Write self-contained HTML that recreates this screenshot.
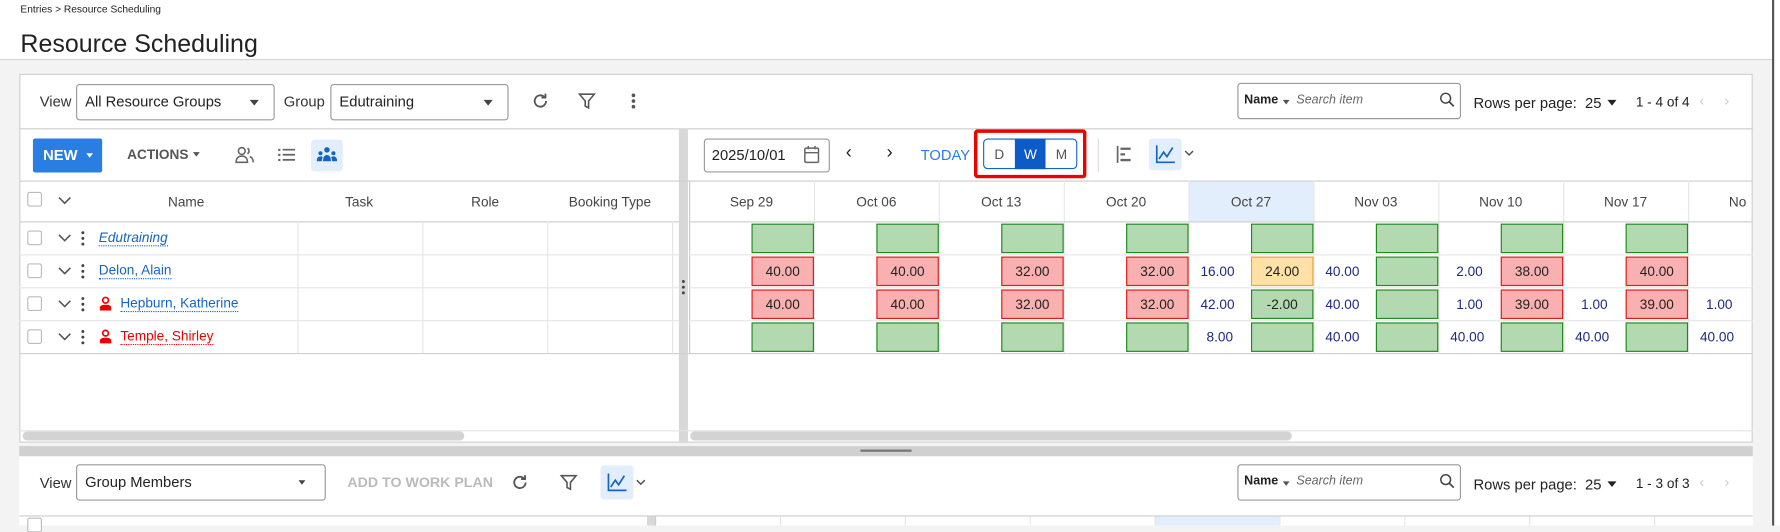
<!DOCTYPE html>
<html><head><meta charset="utf-8"><style>
html,body{margin:0;padding:0;width:1780px;height:525px;overflow:hidden;background:#f3f3f3}
#w{position:absolute;left:0;top:0;width:1568px;height:463px;transform:scale(1.13520);transform-origin:0 0;font-family:"Liberation Sans",sans-serif;font-size:12px;color:#333}
#w div{position:absolute;box-sizing:border-box}
.t{white-space:nowrap}
.sel{border:1px solid #999;border-radius:3px;background:#fff;font-size:13px;color:#222;padding:7px 0 0 7px}
.caret{width:0;height:0;border-left:4px solid transparent;border-right:4px solid transparent;border-top:5px solid #444}
.hl{height:1px;background:#e6e6e6}
.vl{width:1px;background:#e6e6e6}
.g{background:#b2d9b0;border:1px solid #1e8a1e;width:55px;height:26px}
.r{background:#f9b0b0;border:1px solid #e01818;width:55px;height:26px;text-align:center;line-height:24px;font-size:12px;color:#222}
.o{background:#ffe1a8;border:1px solid #eea23a;width:55px;height:26px;text-align:center;line-height:24px;color:#222}
.gt{text-align:center;line-height:24px;color:#222}
.v{width:55px;text-align:center;color:#1c2a80;font-size:12px;line-height:26px;height:26px}
.ch{text-align:center;width:110px;color:#444;font-size:12px;top:171px}
.cb{width:13px;height:13px;border:1px solid #bbb;border-radius:2px;background:#fff}
.chev{font-size:12px;color:#555}
</style></head><body><div id="w">
<!-- header -->
<div style="left:0;top:0;width:1568px;height:53px;background:#fff;border-bottom:1px solid #d4d4d4"></div>
<div class="t" style="left:18px;top:3px;font-size:9px;color:#222">Entries &gt; Resource Scheduling</div>
<div class="t" style="left:18px;top:26px;font-size:22px;color:#222">Resource Scheduling</div>
<div style="left:1561px;top:0;width:2px;height:463px;background:#555"></div>
<div style="left:1563px;top:0;width:5px;height:463px;background:#fff"></div>

<!-- top panel -->
<div style="left:17px;top:65px;width:1527px;height:325px;background:#fff;border:1px solid #cfcfcf"></div>
<div class="t" style="left:35px;top:82px;font-size:13px">View</div>
<div class="sel" style="left:67px;top:74px;width:175px;height:32px">All Resource Groups</div>
<div class="caret" style="left:220px;top:88px"></div>
<div class="t" style="left:250px;top:82px;font-size:13px">Group</div>
<div class="sel" style="left:291px;top:74px;width:157px;height:32px">Edutraining</div>
<div class="caret" style="left:426px;top:88px"></div>
<svg style="position:absolute;left:468px;top:81px" width="16" height="16" viewBox="0 0 16 16"><path d="M13 8a5 5 0 1 1-1.5-3.6" fill="none" stroke="#555" stroke-width="1.6"/><path d="M12.5 1.5v3.5H9" fill="none" stroke="#555" stroke-width="1.6"/></svg>
<svg style="position:absolute;left:509px;top:81px" width="16" height="16" viewBox="0 0 16 16"><path d="M1.5 2h13l-5 6v6l-3-1.5V8z" fill="none" stroke="#555" stroke-width="1.4"/></svg>
<svg style="position:absolute;left:554px;top:81px" width="8" height="16"><circle cx="4" cy="3" r="1.6" fill="#555"/><circle cx="4" cy="8" r="1.6" fill="#555"/><circle cx="4" cy="13" r="1.6" fill="#555"/></svg>

<div style="left:1090px;top:73px;width:197px;height:32px;border:1px solid #999;border-radius:3px;background:#fff"></div>
<div class="t" style="left:1096px;top:82px;font-size:11px;font-weight:bold;color:#222">Name</div>
<div class="caret" style="left:1130px;top:88px;border-top-color:#555;border-width:4px 3px 0"></div>
<div class="t" style="left:1142px;top:82px;font-size:11px;font-style:italic;color:#666">Search item</div>
<svg style="position:absolute;left:1268px;top:81px" width="14" height="14"><circle cx="5.5" cy="5.5" r="4.3" fill="none" stroke="#444" stroke-width="1.3"/><path d="M8.6 8.6l4 4" stroke="#444" stroke-width="1.5"/></svg>
<div class="t" style="left:1298px;top:83px;font-size:13px;color:#222">Rows per page:&nbsp; 25</div>
<div class="caret" style="left:1416px;top:88px;border-top-color:#222"></div>
<div class="t" style="left:1441px;top:83px;font-size:12px;color:#222">1 - 4 of 4</div>
<div class="t" style="left:1497px;top:81px;font-size:13px;color:#ccc">‹</div>
<div class="t" style="left:1519px;top:81px;font-size:13px;color:#ccc">›</div>
<div class="hl" style="left:17px;top:113px;width:1527px;background:#ccc"></div>

<!-- toolbar 2 left -->
<div style="left:29px;top:122px;width:61px;height:30px;background:#2a7de1;border-radius:2px"></div>
<div class="t" style="left:38px;top:129px;font-size:13px;font-weight:bold;color:#fff">NEW</div>
<div class="caret" style="left:76px;top:135px;border-top-color:#fff;border-width:4px 3px 0"></div>
<div class="t" style="left:112px;top:129px;font-size:12px;font-weight:bold;color:#555">ACTIONS</div>
<div class="caret" style="left:170px;top:134px;border-top-color:#555;border-width:4px 3px 0"></div>
<svg style="position:absolute;left:207px;top:129px" width="17" height="15" viewBox="0 0 17 15"><circle cx="6" cy="4" r="3" fill="none" stroke="#666" stroke-width="1.4"/><path d="M1 14c0-4 2.5-5.5 5-5.5s5 1.5 5 5.5z" fill="none" stroke="#666" stroke-width="1.4"/><path d="M11 1.5a3 3 0 0 1 0 5M13 9c2 .5 3 2 3 5" fill="none" stroke="#666" stroke-width="1.4"/></svg>
<svg style="position:absolute;left:245px;top:131px" width="15" height="11"><g fill="#666"><rect x="0" y="0" width="2" height="2"/><rect x="0" y="4.5" width="2" height="2"/><rect x="0" y="9" width="2" height="2"/><rect x="4" y="0" width="11" height="1.6"/><rect x="4" y="4.5" width="11" height="1.6"/><rect x="4" y="9" width="11" height="1.6"/></g></svg>
<div style="left:274px;top:123px;width:28px;height:28px;background:#e3eefc;border-radius:3px"></div>
<svg style="position:absolute;left:279px;top:129px" width="18" height="14" viewBox="0 0 18 14"><g fill="#1565c0"><circle cx="9" cy="3" r="2.4"/><path d="M5.5 13c0-4 1.5-5.5 3.5-5.5s3.5 1.5 3.5 5.5z"/><circle cx="3.3" cy="6" r="1.8"/><path d="M0 13c0-3 1.3-4.3 3.3-4.3 1 0 1.6.3 2 .8-.5 1-.8 2-.8 3.5z"/><circle cx="14.7" cy="6" r="1.8"/><path d="M18 13c0-3-1.3-4.3-3.3-4.3-1 0-1.6.3-2 .8.5 1 .8 2 .8 3.5z"/></g></svg>

<!-- splitter vertical -->
<div style="left:598px;top:113px;width:8px;height:277px;background:#d8d8d8"></div>
<svg style="position:absolute;left:600px;top:246px" width="4" height="14"><circle cx="2" cy="2" r="1.3" fill="#444"/><circle cx="2" cy="7" r="1.3" fill="#444"/><circle cx="2" cy="12" r="1.3" fill="#444"/></svg>

<!-- toolbar 2 right -->
<div style="left:620px;top:122px;width:111px;height:30px;border:1px solid #999;border-radius:3px;background:#fff"></div>
<div class="t" style="left:627px;top:129px;font-size:13px;color:#222">2025/10/01</div>
<svg style="position:absolute;left:708px;top:128px" width="14" height="16" viewBox="0 0 14 16"><rect x="1" y="2.5" width="12" height="12.5" rx="1" fill="none" stroke="#666" stroke-width="1.3"/><path d="M1 6.5h12M4 0.5v3M10 0.5v3" stroke="#666" stroke-width="1.3"/></svg>
<div class="t" style="left:745px;top:126px;font-size:16px;color:#222">‹</div>
<div class="t" style="left:781px;top:126px;font-size:16px;color:#222">›</div>
<div class="t" style="left:811px;top:129px;font-size:13px;color:#2a7de1">TODAY</div>
<div style="left:858px;top:114px;width:99px;height:43px;border:3px solid #ee0000;border-radius:3px"></div>
<div style="left:866px;top:122px;width:83px;height:27px;border:1px solid #1565c0;border-radius:4px;background:#fff;overflow:hidden"></div>
<div style="left:894px;top:122px;width:27px;height:27px;background:#0d5bc6"></div>
<div class="t" style="left:876px;top:129px;font-size:12px;color:#555">D</div>
<div class="t" style="left:902px;top:129px;font-size:12px;color:#fff">W</div>
<div class="t" style="left:930px;top:129px;font-size:12px;color:#555">M</div>
<div style="left:967px;top:122px;width:1px;height:30px;background:#ddd"></div>
<svg style="position:absolute;left:983px;top:128px" width="14" height="16" viewBox="0 0 14 16"><path d="M1.5 0.5v15" stroke="#666" stroke-width="1.5"/><path d="M4 3h9M4 8h4M4 13h9" stroke="#666" stroke-width="2"/></svg>
<div style="left:1012px;top:122px;width:29px;height:28px;background:#e3eefc;border-radius:3px"></div>
<svg style="position:absolute;left:1018px;top:128px" width="17" height="16" viewBox="0 0 17 16"><path d="M1 0v15h16" fill="none" stroke="#1565c0" stroke-width="1.5"/><path d="M3 12l4-6 3 4 5-8" fill="none" stroke="#1565c0" stroke-width="1.5"/></svg>
<svg style="position:absolute;left:1043px;top:132px" width="9" height="6"><path d="M1 1l3.5 3.5L8 1" fill="none" stroke="#555" stroke-width="1.3"/></svg>
<div class="hl" style="left:17px;top:159px;width:1527px;background:#ccc"></div>

<!-- left header -->
<div class="cb" style="left:24px;top:169px"></div>
<svg style="position:absolute;left:51px;top:173px" width="12" height="7"><path d="M1 1l5 5 5-5" fill="none" stroke="#555" stroke-width="1.4"/></svg>
<div class="t" style="left:148px;top:171px;color:#444">Name</div>
<div class="t" style="left:304px;top:171px;color:#444">Task</div>
<div class="t" style="left:415px;top:171px;color:#444">Role</div>
<div class="t" style="left:501px;top:171px;color:#444">Booking Type</div>
<div class="hl" style="left:17px;top:195px;width:581px;background:#ccc"></div>
<div class="vl" style="left:262px;top:195px;height:116px"></div>
<div class="vl" style="left:372px;top:195px;height:116px"></div>
<div class="vl" style="left:482px;top:195px;height:116px"></div>
<div class="vl" style="left:592px;top:195px;height:116px"></div>
<div class="hl" style="left:17px;top:224px;width:581px"></div>
<div class="hl" style="left:17px;top:253px;width:581px"></div>
<div class="hl" style="left:17px;top:282px;width:581px"></div>
<div class="hl" style="left:17px;top:311px;width:1527px;background:#d0d0d0"></div>

<!-- left rows -->
<div class="cb" style="left:24px;top:203px"></div>
<div class="cb" style="left:24px;top:232px"></div>
<div class="cb" style="left:24px;top:261px"></div>
<div class="cb" style="left:24px;top:290px"></div>
<svg style="position:absolute;left:51px;top:206px" width="12" height="7"><path d="M1 1l5 5 5-5" fill="none" stroke="#555" stroke-width="1.4"/></svg>
<svg style="position:absolute;left:51px;top:235px" width="12" height="7"><path d="M1 1l5 5 5-5" fill="none" stroke="#555" stroke-width="1.4"/></svg>
<svg style="position:absolute;left:51px;top:264px" width="12" height="7"><path d="M1 1l5 5 5-5" fill="none" stroke="#555" stroke-width="1.4"/></svg>
<svg style="position:absolute;left:51px;top:293px" width="12" height="7"><path d="M1 1l5 5 5-5" fill="none" stroke="#555" stroke-width="1.4"/></svg>
<svg style="position:absolute;left:71px;top:203px" width="4" height="14"><circle cx="2" cy="2" r="1.3" fill="#444"/><circle cx="2" cy="7" r="1.3" fill="#444"/><circle cx="2" cy="12" r="1.3" fill="#444"/></svg>
<svg style="position:absolute;left:71px;top:232px" width="4" height="14"><circle cx="2" cy="2" r="1.3" fill="#444"/><circle cx="2" cy="7" r="1.3" fill="#444"/><circle cx="2" cy="12" r="1.3" fill="#444"/></svg>
<svg style="position:absolute;left:71px;top:261px" width="4" height="14"><circle cx="2" cy="2" r="1.3" fill="#444"/><circle cx="2" cy="7" r="1.3" fill="#444"/><circle cx="2" cy="12" r="1.3" fill="#444"/></svg>
<svg style="position:absolute;left:71px;top:290px" width="4" height="14"><circle cx="2" cy="2" r="1.3" fill="#444"/><circle cx="2" cy="7" r="1.3" fill="#444"/><circle cx="2" cy="12" r="1.3" fill="#444"/></svg>
<div class="t" style="left:87px;top:202px;font-style:italic;color:#1565c0;border-bottom:1px dotted #1565c0">Edutraining</div>
<div class="t" style="left:87px;top:231px;color:#1565c0;border-bottom:1px dotted #1565c0">Delon, Alain</div>
<svg style="position:absolute;left:87px;top:261px" width="12" height="13" viewBox="0 0 12 13"><circle cx="6" cy="3.5" r="2.5" fill="none" stroke="#e00" stroke-width="1.5"/><path d="M1 12.5v-2.5c0-1.5 1.5-2.5 5-2.5s5 1 5 2.5v2.5z" fill="#e00"/></svg>
<div class="t" style="left:106px;top:260px;color:#1565c0;border-bottom:1px dotted #1565c0">Hepburn, Katherine</div>
<svg style="position:absolute;left:87px;top:290px" width="12" height="13" viewBox="0 0 12 13"><circle cx="6" cy="3.5" r="2.5" fill="none" stroke="#e00" stroke-width="1.5"/><path d="M1 12.5v-2.5c0-1.5 1.5-2.5 5-2.5s5 1 5 2.5v2.5z" fill="#e00"/></svg>
<div class="t" style="left:106px;top:289px;color:#e00;border-bottom:1px dotted #e00">Temple, Shirley</div>

<!-- right header -->
<div style="left:1047px;top:160px;width:110px;height:35px;background:#e3eefc"></div>
<div class="vl" style="left:607px;top:159px;height:152px;background:#ccc"></div>
<div class="vl" style="left:717px;top:159px;height:152px"></div>
<div class="vl" style="left:827px;top:159px;height:152px"></div>
<div class="vl" style="left:937px;top:159px;height:152px"></div>
<div class="vl" style="left:1047px;top:159px;height:152px"></div>
<div class="vl" style="left:1157px;top:159px;height:152px"></div>
<div class="vl" style="left:1267px;top:159px;height:152px"></div>
<div class="vl" style="left:1377px;top:159px;height:152px"></div>
<div class="vl" style="left:1487px;top:159px;height:152px"></div>
<div class="ch t" style="left:607px">Sep 29</div>
<div class="ch t" style="left:717px">Oct 06</div>
<div class="ch t" style="left:827px">Oct 13</div>
<div class="ch t" style="left:937px">Oct 20</div>
<div class="ch t" style="left:1047px">Oct 27</div>
<div class="ch t" style="left:1157px">Nov 03</div>
<div class="ch t" style="left:1267px">Nov 10</div>
<div class="ch t" style="left:1377px">Nov 17</div>
<div class="t" style="left:1523px;top:171px;color:#444">No</div>
<div class="hl" style="left:607px;top:195px;width:937px;background:#ccc"></div>
<div class="hl" style="left:607px;top:224px;width:937px"></div>
<div class="hl" style="left:607px;top:253px;width:937px"></div>
<div class="hl" style="left:607px;top:282px;width:937px"></div>

<!-- row0 -->
<div class="g" style="left:662px;top:197px"></div><div class="g" style="left:772px;top:197px"></div><div class="g" style="left:882px;top:197px"></div><div class="g" style="left:992px;top:197px"></div><div class="g" style="left:1102px;top:197px"></div><div class="g" style="left:1212px;top:197px"></div><div class="g" style="left:1322px;top:197px"></div><div class="g" style="left:1432px;top:197px"></div>
<!-- row1 -->
<div class="r" style="left:662px;top:226px">40.00</div><div class="r" style="left:772px;top:226px">40.00</div><div class="r" style="left:882px;top:226px">32.00</div><div class="r" style="left:992px;top:226px">32.00</div>
<div class="v" style="left:1045px;top:226px">16.00</div><div class="o" style="left:1102px;top:226px">24.00</div>
<div class="v" style="left:1155px;top:226px">40.00</div><div class="g" style="left:1212px;top:226px"></div>
<div class="v" style="left:1267px;top:226px">2.00</div><div class="r" style="left:1322px;top:226px">38.00</div>
<div class="r" style="left:1432px;top:226px">40.00</div>
<!-- row2 -->
<div class="r" style="left:662px;top:255px">40.00</div><div class="r" style="left:772px;top:255px">40.00</div><div class="r" style="left:882px;top:255px">32.00</div><div class="r" style="left:992px;top:255px">32.00</div>
<div class="v" style="left:1045px;top:255px">42.00</div><div class="g gt" style="left:1102px;top:255px">-2.00</div>
<div class="v" style="left:1155px;top:255px">40.00</div><div class="g" style="left:1212px;top:255px"></div>
<div class="v" style="left:1267px;top:255px">1.00</div><div class="r" style="left:1322px;top:255px">39.00</div>
<div class="v" style="left:1377px;top:255px">1.00</div><div class="r" style="left:1432px;top:255px">39.00</div>
<div class="v" style="left:1487px;top:255px">1.00</div>
<!-- row3 -->
<div class="g" style="left:662px;top:284px"></div><div class="g" style="left:772px;top:284px"></div><div class="g" style="left:882px;top:284px"></div><div class="g" style="left:992px;top:284px"></div>
<div class="v" style="left:1047px;top:284px">8.00</div><div class="g" style="left:1102px;top:284px"></div>
<div class="v" style="left:1155px;top:284px">40.00</div><div class="g" style="left:1212px;top:284px"></div>
<div class="v" style="left:1265px;top:284px">40.00</div><div class="g" style="left:1322px;top:284px"></div>
<div class="v" style="left:1375px;top:284px">40.00</div><div class="g" style="left:1432px;top:284px"></div>
<div class="v" style="left:1485px;top:284px">40.00</div>

<!-- scrollbars -->
<div class="hl" style="left:17px;top:379px;width:1527px;background:#dde5ee"></div>
<div style="left:20px;top:380px;width:389px;height:8px;background:#d3d3d3;border-radius:4px"></div>
<div style="left:608px;top:380px;width:530px;height:8px;background:#d3d3d3;border-radius:4px"></div>

<!-- horizontal splitter -->
<div style="left:17px;top:393px;width:1527px;height:9px;background:#d0d0d0"></div>
<div style="left:758px;top:396px;width:45px;height:2px;background:#777"></div>

<!-- bottom panel -->
<div style="left:17px;top:402px;width:1527px;height:61px;background:#fff"></div>
<div class="t" style="left:35px;top:418px;font-size:13px">View</div>
<div class="sel" style="left:67px;top:409px;width:220px;height:32px">Group Members</div>
<div class="caret" style="left:263px;top:423px;border-width:4px 3px 0"></div>
<div class="t" style="left:306px;top:418px;font-size:12.5px;font-weight:bold;color:#bbb">ADD TO WORK PLAN</div>
<svg style="position:absolute;left:450px;top:417px" width="16" height="16" viewBox="0 0 16 16"><path d="M13 8a5 5 0 1 1-1.5-3.6" fill="none" stroke="#555" stroke-width="1.6"/><path d="M12.5 1.5v3.5H9" fill="none" stroke="#555" stroke-width="1.6"/></svg>
<svg style="position:absolute;left:493px;top:417px" width="16" height="16" viewBox="0 0 16 16"><path d="M1.5 2h13l-5 6v6l-3-1.5V8z" fill="none" stroke="#555" stroke-width="1.4"/></svg>
<div style="left:529px;top:410px;width:29px;height:30px;background:#e3eefc;border-radius:3px"></div>
<svg style="position:absolute;left:535px;top:417px" width="17" height="16" viewBox="0 0 17 16"><path d="M1 0v15h16" fill="none" stroke="#1565c0" stroke-width="1.5"/><path d="M3 12l4-6 3 4 5-8" fill="none" stroke="#1565c0" stroke-width="1.5"/></svg>
<svg style="position:absolute;left:560px;top:422px" width="9" height="6"><path d="M1 1l3.5 3.5L8 1" fill="none" stroke="#555" stroke-width="1.3"/></svg>
<div style="left:1090px;top:409px;width:197px;height:32px;border:1px solid #999;border-radius:3px;background:#fff"></div>
<div class="t" style="left:1096px;top:418px;font-size:11px;font-weight:bold;color:#222">Name</div>
<div class="caret" style="left:1130px;top:424px;border-top-color:#555;border-width:4px 3px 0"></div>
<div class="t" style="left:1142px;top:418px;font-size:11px;font-style:italic;color:#666">Search item</div>
<svg style="position:absolute;left:1268px;top:417px" width="14" height="14"><circle cx="5.5" cy="5.5" r="4.3" fill="none" stroke="#444" stroke-width="1.3"/><path d="M8.6 8.6l4 4" stroke="#444" stroke-width="1.5"/></svg>
<div class="t" style="left:1298px;top:419px;font-size:13px;color:#222">Rows per page:&nbsp; 25</div>
<div class="caret" style="left:1416px;top:424px;border-top-color:#222"></div>
<div class="t" style="left:1441px;top:419px;font-size:12px;color:#222">1 - 3 of 3</div>
<div class="t" style="left:1497px;top:417px;font-size:13px;color:#ccc">‹</div>
<div class="t" style="left:1519px;top:417px;font-size:13px;color:#ccc">›</div>
<div class="hl" style="left:17px;top:454px;width:1527px;background:#ccc"></div>
<div class="cb" style="left:24px;top:456px"></div>
<div style="left:570px;top:455px;width:7px;height:8px;background:#d8d8d8"></div>
<div style="left:1017px;top:455px;width:110px;height:8px;background:#e3eefc"></div>
<div class="vl" style="left:577px;top:455px;height:8px;background:#ccc"></div>
<div class="vl" style="left:687px;top:455px;height:8px"></div>
<div class="vl" style="left:797px;top:455px;height:8px"></div>
<div class="vl" style="left:907px;top:455px;height:8px"></div>
<div class="vl" style="left:1017px;top:455px;height:8px"></div>
<div class="vl" style="left:1127px;top:455px;height:8px"></div>
<div class="vl" style="left:1237px;top:455px;height:8px"></div>
<div class="vl" style="left:1347px;top:455px;height:8px"></div>
<div class="vl" style="left:1457px;top:455px;height:8px"></div>
</div></body></html>
